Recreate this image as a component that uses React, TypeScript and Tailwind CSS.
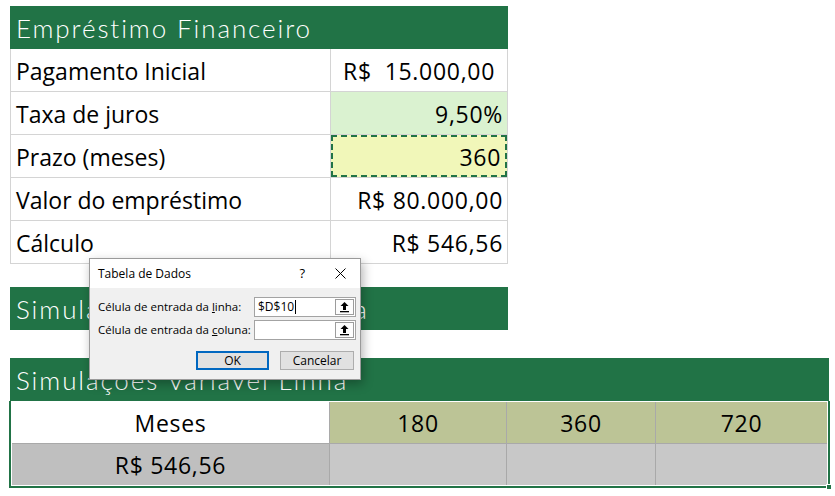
import React from 'react';

const GREEN = 'bg-[#217346]';

const rows = [
  { label: 'Pagamento Inicial', value: 'R$  15.000,00', cell: 'bg-white', accounting: true },
  { label: 'Taxa de juros', value: '9,50%', cell: 'bg-[#daf2d0]' },
  { label: 'Prazo (meses)', value: '360', cell: 'bg-[#f1f7b9]', marching: true },
  { label: 'Valor do empréstimo', value: 'R$ 80.000,00', cell: 'bg-white' },
  { label: 'Cálculo', value: 'R$ 546,56', cell: 'bg-white' },
];

const UpArrow = () => (
  <svg width="11" height="12" viewBox="0 0 11 12">
    <path d="M5.5 1 L1.5 5 H4 V9 H7 V5 H9.5 Z" fill="#000" />
    <rect x="1" y="10" width="9" height="1.3" fill="#000" />
  </svg>
);

const RefInput = ({ value, caret }: { value?: string; caret?: boolean }) => (
  <div className="flex h-[20px] w-[102px] border border-[#a3a3a3] bg-white">
    <div className="flex flex-1 items-center pl-[3px] text-[12px] text-black">
      {value}
      {caret && <span className="ml-px inline-block h-[14px] w-px bg-black" />}
    </div>
    <div className="m-px flex w-[19px] items-center justify-center border border-[#9c9c9c] bg-[#fdfdfd]">
      <UpArrow />
    </div>
  </div>
);

const Dialog = () => (
  <div
    className="absolute left-[89px] top-[258px] flex h-[122px] w-[272px] flex-col border border-[#9a9a9a] bg-[#f0f0f0] shadow-[2px_4px_10px_rgba(0,0,0,0.3)]"
    style={{ fontFamily: '"Open Sans", "Noto Sans", sans-serif' }}
  >
    <div className="flex h-[29px] items-center bg-white pl-[8px] pr-[14px] text-[12px] text-black">
      <span className="flex-1">Tabela de Dados</span>
      <span className="mr-[30px] text-[13px]">?</span>
      <svg width="11" height="11" viewBox="0 0 11 11">
        <path d="M0.5 0.5 L10.5 10.5 M10.5 0.5 L0.5 10.5" stroke="#000" strokeWidth="1" />
      </svg>
    </div>
    <div className="flex flex-col gap-[3px] pl-[8px] pt-[9px] text-[11.5px] text-black">
      <div className="flex items-center">
        <span className="w-[156px] whitespace-nowrap">
          Célula de entrada da <u>l</u>inha:
        </span>
        <RefInput value="$D$10" caret />
      </div>
      <div className="flex items-center">
        <span className="w-[156px] whitespace-nowrap">
          Célula de entrada da <u>c</u>oluna:
        </span>
        <RefInput />
      </div>
    </div>
    <div className="mt-[11px] flex justify-end gap-[11px] pr-[6px] text-[12px] text-black">
      <button className="h-[19px] w-[73px] border-2 border-[#0067c0] bg-[#e1e1e1] leading-none">OK</button>
      <button className="h-[19px] w-[74px] border border-[#adadad] bg-[#e1e1e1] leading-none">Cancelar</button>
    </div>
  </div>
);

const Bar = ({ title, width }: { title: string; width: string }) => (
  <div
    className={`${GREEN} ${width} flex h-[43px] items-center whitespace-nowrap pl-[6px] pt-[2px] text-[26px] font-light tracking-[1.9px] text-white`}
    style={{ fontFamily: '"Lato", "DejaVu Sans", sans-serif' }}
  >
    {title}
  </div>
);

export default function App() {
  return (
    <div
      className="relative h-[496px] w-[835px] overflow-hidden bg-white"
      style={{ fontFamily: '"Open Sans", "Noto Sans", sans-serif' }}
    >
      <div className="flex flex-col pl-[10px] pt-[6px]">
        {/* Empréstimo */}
        <Bar title="Empréstimo Financeiro" width="w-[498px]" />
        <div className="w-[498px] border-l border-r border-[#d4d4d4]">
          {rows.map((r) => (
            <div key={r.label} className="grid h-[43px] grid-cols-[320px_1fr] border-b border-[#d4d4d4] text-[23px] text-black">
              <div className="flex items-center border-r border-[#d4d4d4] pl-[5px] pt-[3px]">{r.label}</div>
              <div
                className={`${r.cell} flex items-center justify-end pt-[3px] tracking-[0.7px] ${r.accounting ? 'pr-[12px]' : 'pr-[4px]'} ${
                  r.marching ? 'border-2 border-dashed border-[#217346]' : ''
                }`}
              >
                {r.accounting ? (
                  <span className="flex w-full justify-between pl-[12px]">
                    <span>R$</span>
                    <span>15.000,00</span>
                  </span>
                ) : (
                  r.value
                )}
              </div>
            </div>
          ))}
        </div>

        <div className="mt-[23px]">
          <Bar title="Simulações Variável Coluna" width="w-[498px]" />
        </div>

        <div className="mt-[28px]">
          <Bar title="Simulações Variável Linha" width="w-[819px]" />
        </div>

        {/* Linha table */}
        <div className="relative -ml-px w-[821px] border-2 border-t-0 border-[#217346]">
          <div className="grid grid-cols-[318px_177px_149px_1fr] border border-white text-[23px] tracking-[0.7px] text-black">
            <div className="flex h-[42px] items-center justify-center border-b border-r border-[#a9a9a9] bg-white pt-[2px]">Meses</div>
            <div className="flex h-[42px] items-center justify-center border-b border-r border-[#a9a9a9] bg-[#bcc496] pt-[2px]">180</div>
            <div className="flex h-[42px] items-center justify-center border-b border-r border-[#a9a9a9] bg-[#bcc496] pt-[2px]">360</div>
            <div className="flex h-[42px] items-center justify-center border-b border-[#a9a9a9] bg-[#bcc496] pt-[2px]">720</div>
            <div className="flex h-[41px] items-center justify-center border-r border-[#a9a9a9] bg-[#bfbfbf] pt-[2px]">R$ 546,56</div>
            <div className="h-[41px] border-r border-[#a9a9a9] bg-[#c8c8c8]" />
            <div className="h-[41px] border-r border-[#a9a9a9] bg-[#c8c8c8]" />
            <div className="h-[41px] bg-[#c8c8c8]" />
          </div>
          <div className="absolute -bottom-[4px] -right-[4px] h-[6px] w-[6px] border border-white bg-[#217346]" />
        </div>
      </div>

      <Dialog />
    </div>
  );
}
